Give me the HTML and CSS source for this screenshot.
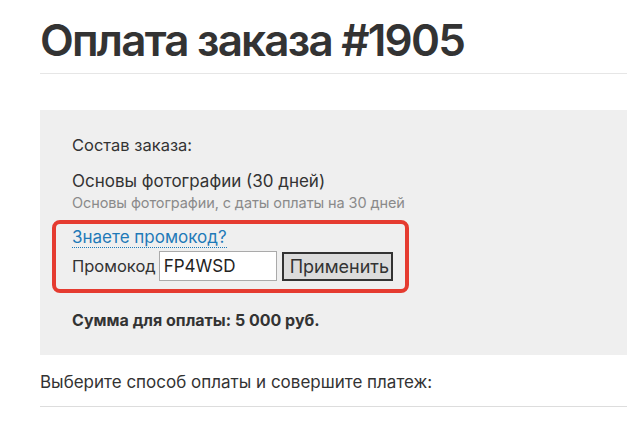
FILE: index.html
```html
<!DOCTYPE html>
<html lang="ru">
<head>
    <meta charset="UTF-8">
    <meta name="viewport" content="width=device-width, initial-scale=1.0">
    <title>Оплата заказа #1905</title>
    <link rel="stylesheet" href="styles.css">
</head>
<body>
    <main class="page">
        <h1 class="page-title">Оплата заказа #1905</h1>

        <section class="order-box">
            <p class="order-caption">Состав заказа:</p>
            <p class="order-item">Основы фотографии (30 дней)</p>
            <p class="order-note">Основы фотографии, с даты оплаты на 30 дней</p>

            <div class="promo">
                <a class="promo-link" href="#">Знаете промокод?</a>
                <form class="promo-form">
                    <label for="promo">Промокод</label>
                    <input id="promo" type="text" value="FP4WSD">
                    <button type="button" class="promo-btn">Применить</button>
                </form>
            </div>

            <p class="order-total">Сумма для оплаты: 5 000 руб.</p>
        </section>

        <p class="pay-hint">Выберите способ оплаты и совершите платеж:</p>
    </main>
</body>
</html>
```

FILE: styles.css
```css
body {
    margin: 0;
    font-family: Inter, "Open Sans", sans-serif;
    color: #333;
    background: #fff;
    overflow: hidden;
}
.page {
    padding: 13px 0 0 40px;
}
.page-title {
    margin: 0;
    font-size: 44px;
    line-height: 55px;
    font-weight: 600;
    letter-spacing: -1.8px;
    padding-bottom: 5px;
    border-bottom: 1px solid #e6e6e6;
}
.order-box {
    margin-top: 36px;
    background: #efefef;
    padding: 23px 32px;
}
.order-box p {
    margin: 0;
}
.order-caption {
    font-size: 16.5px;
    line-height: 24px;
}
.order-item {
    margin-top: 12px !important;
    font-size: 17px;
    line-height: 24px;
}
.order-note {
    margin-top: 1px !important;
    font-size: 14.5px;
    line-height: 18px;
    color: #8a8a8a;
    letter-spacing: -0.1px;
}
.promo {
    display: inline-block;
    margin: 8px 0 0 -20px;
    padding: 3px 12px 8px 16px;
    border: 4px solid #e53b30;
    border-radius: 8px;
}
.promo-link {
    display: inline-block;
    font-size: 17px;
    line-height: 20px;
    color: #1f7ab8;
    text-decoration: none;
    border-bottom: 1px dotted #1f7ab8;
}
.promo-form {
    display: flex;
    align-items: center;
    gap: 3px;
    margin-top: 3px;
    font-size: 16.5px;
}
.promo-form input {
    box-sizing: border-box;
    width: 118px;
    height: 30px;
    padding: 0 4px;
    border: 1px solid #aaa;
    font-family: inherit;
    font-size: 17px;
    color: #222;
    background: #fff;
}
.promo-btn {
    margin-left: 2px;
    width: 111px;
    height: 29px;
    border: 2px solid #333;
    background: #dcdcdc;
    font-family: inherit;
    font-size: 18px;
    color: #333;
}
.order-total {
    margin-top: 15px !important;
    font-size: 16px;
    line-height: 24px;
    font-weight: 700;
}
.pay-hint {
    margin: 15px 0 0;
    font-size: 17px;
    line-height: 24px;
    padding-bottom: 12px;
    border-bottom: 1px solid #ddd;
}
```
